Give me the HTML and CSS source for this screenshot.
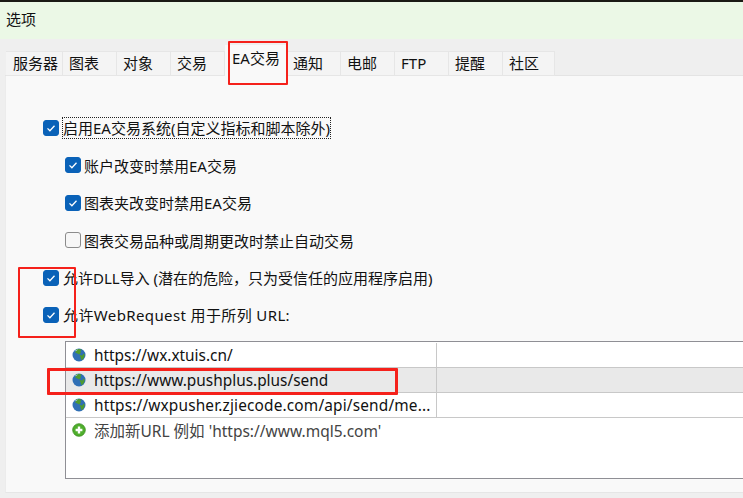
FILE: index.html
```html
<!DOCTYPE html>
<html lang="zh">
<head>
<meta charset="utf-8">
<title>选项</title>
<link rel="stylesheet" href="styles.css">
</head>
<body>
<div class="chart-strip"></div>
<header class="titlebar">选项</header>
<main class="dialog">
  <nav class="tabs">
    <span class="tab tab-wide">服务器</span>
    <span class="tab">图表</span>
    <span class="tab">对象</span>
    <span class="tab">交易</span>
    <span class="tab tab-active">EA交易</span>
    <span class="tab">通知</span>
    <span class="tab">电邮</span>
    <span class="tab">FTP</span>
    <span class="tab">提醒</span>
    <span class="tab tab-last">社区</span>
  </nav>
  <section class="panel">
    <div class="options">
      <label class="option"><span class="box box-on"><svg viewBox="0 0 16 16"><path d="M4.5 8.4l2.4 2.3 4.6-5"/></svg></span><span class="focus-text">启用EA交易系统(自定义指标和脚本除外)</span></label>
      <label class="option nested"><span class="box box-on"><svg viewBox="0 0 16 16"><path d="M4.5 8.4l2.4 2.3 4.6-5"/></svg></span><span>账户改变时禁用EA交易</span></label>
      <label class="option nested"><span class="box box-on"><svg viewBox="0 0 16 16"><path d="M4.5 8.4l2.4 2.3 4.6-5"/></svg></span><span>图表夹改变时禁用EA交易</span></label>
      <label class="option nested"><span class="box"></span><span>图表交易品种或周期更改时禁止自动交易</span></label>
      <label class="option"><span class="box box-on"><svg viewBox="0 0 16 16"><path d="M4.5 8.4l2.4 2.3 4.6-5"/></svg></span><span>允许DLL导入 (潜在的危险，只为受信任的应用程序启用)</span></label>
      <label class="option"><span class="box box-on"><svg viewBox="0 0 16 16"><path d="M4.5 8.4l2.4 2.3 4.6-5"/></svg></span><span class="latin-wide">允许WebRequest 用于所列 URL:</span></label>
    </div>
    <div class="url-list">
      <div class="url-row">
        <div class="url-cell"><svg class="icon" viewBox="0 0 14 14"><use href="#globe"/></svg><span class="url-text">https://wx.xtuis.cn/</span></div>
        <div class="url-rest"></div>
      </div>
      <div class="url-row url-selected">
        <div class="url-cell"><svg class="icon" viewBox="0 0 14 14"><use href="#globe"/></svg><span class="url-text">https://www.pushplus.plus/send</span></div>
        <div class="url-rest"></div>
      </div>
      <div class="url-row">
        <div class="url-cell"><svg class="icon" viewBox="0 0 14 14"><use href="#globe"/></svg><span class="url-text url-long">https://wxpusher.zjiecode.com/api/send/me...</span></div>
        <div class="url-rest"></div>
      </div>
      <div class="url-add">
        <svg class="icon" viewBox="0 0 14 14"><circle cx="7" cy="7" r="6.3" fill="#4fae2c" stroke="#3b8f1f" stroke-width=".8"/><path d="M7 3.6v6.8M3.600 7h6.800" stroke="#fff" stroke-width="2.4"/></svg>
        <span>添加新URL 例如 'https://www.mql5.com'</span>
      </div>
    </div>
  </section>
</main>
<div class="mark mark-tab"></div>
<div class="mark mark-checks"></div>
<div class="mark mark-row"></div>
<svg class="defs" width="0" height="0">
  <defs>
    <g id="globe">
      <circle cx="7" cy="7" r="6.5" fill="#2f6fb5"/>
      <path d="M4 1.600c2-1 4.500-.8 5.600.2L8.400 3.400 9 5 7 6.600 5.300 5.600 3.300 4.600zM7.600 7l3 .4.600-2 1.400 1.200c.1 2.600-1.300 4.600-3 5.600L8.600 9.400z" fill="#4f9b2f"/>
      <path d="M2.500 3.200C3.600 2 5 1.500 6 1.500L4.200 3z" fill="#a9d3ee"/>
    </g>
  </defs>
</svg>
</body>
</html>
```
FILE: styles.css
```css
* { box-sizing: border-box; }
html, body { margin: 0; height: 100%; overflow: hidden; }
body {
  width: 743px;
  height: 498px;
  position: relative;
  background: #efefef;
  font-family: "Noto Sans", "Noto Sans CJK SC", sans-serif;
  font-size: 15px;
  color: #111;
}
.chart-strip { height: 2px; background: #1a1a14; }
.titlebar {
  height: 37px;
  padding: 7px 0 0 6px;
  background: #ebf8e6;
  font-size: 15px;
  line-height: 20px;
}
.dialog { height: 459px; padding: 0 0 5px 5px; display: flex; flex-direction: column; }
.tabs { height: 37px; display: flex; align-items: flex-end; padding-left: 1px; border-bottom: 1px solid #e4e4e4; }
.tab {
  width: 54px;
  height: 25px;
  margin-bottom: -1px;
  border: 1px solid #e6e6e6;
  border-left: 0;
  background: #f4f4f4;
  padding-left: 6px;
  line-height: 23px;
  white-space: nowrap;
}
.tab-wide { width: 57px; padding-left: 7px; }
.tab-last { width: 52px; }
.tab-active {
  width: 62px;
  height: 31px;
  background: #f9f9f9;
  border: 0;
  padding: 2px 0 0 7px;
  line-height: 22px;
}
.panel { flex: 1; background: #f9f9f9; padding-top: 42px; border-left: 1px solid #ececec; border-bottom: 1px solid #e6e6e6; }
.options { display: flex; flex-direction: column; gap: 17.4px; padding-left: 37px; }
.option { height: 20px; display: flex; align-items: center; gap: 4px; white-space: nowrap; }
.nested { padding-left: 22px; gap: 3px; }
.box {
  width: 16px;
  height: 16px;
  flex: none;
  border-radius: 3px;
  border: 1px solid #8b8b8b;
  background: #f6f6f6;
}
.box-on { background: #0a62b8; border-color: #0a62b8; display: block; position: relative; }
.box-on svg { position: absolute; inset: -1px; width: 16px; height: 16px; }
.box-on path { fill: none; stroke: #fff; stroke-width: 1.3px; }
.focus-text { outline: 1px dotted #222; line-height: 20px; }
.latin-wide { letter-spacing: .38px; }
.url-list {
  margin: 16px 0 0 59px;
  height: 138px;
  border: 1px solid #8f8f95;
  border-right: 0;
  background: #fff;
  padding-top: 1px;
}
.url-row { height: 25px; display: flex; border-bottom: 1px solid #c8c8c8; }
.url-selected { background: #e9e9e9; }
.url-cell {
  width: 371px;
  padding-left: 6px;
  display: flex;
  align-items: center;
  gap: 8px;
  border-right: 1px solid #c8c8c8;
  white-space: nowrap;
  overflow: hidden;
  font-size: 15.4px;
}
.url-text { padding-top: 1px; }
.url-long { letter-spacing: .16px; }
.url-rest { flex: 1; }
.url-add {
  height: 25px;
  padding-left: 6px;
  display: flex;
  align-items: center;
  gap: 8px;
  color: #444;
  font-size: 15.5px;
  white-space: nowrap;
}
.icon { width: 14px; height: 14px; flex: none; }
.mark { position: absolute; border: 2px solid #f5211b; border-radius: 1px; }
.mark-tab { left: 228px; top: 41px; width: 60px; height: 44px; }
.mark-checks { left: 18px; top: 267px; width: 58px; height: 71px; }
.mark-row { left: 47px; top: 368px; width: 351px; height: 27px; border-width: 3px; }
.defs { position: absolute; }
```
